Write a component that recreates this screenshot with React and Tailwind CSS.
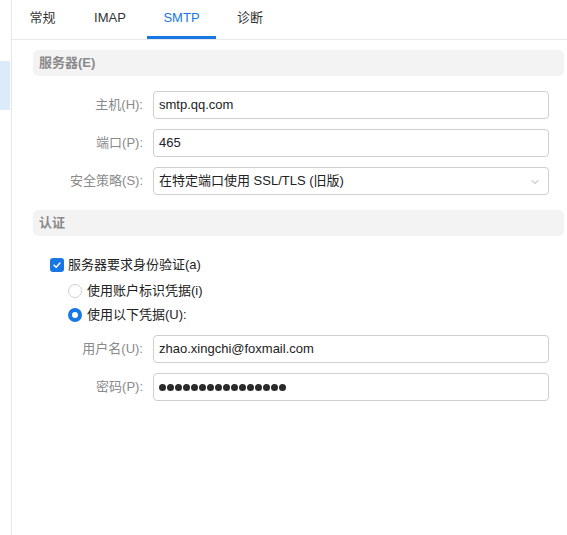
import React from 'react';
import { ChevronDown } from 'lucide-react';

const font = "font-['Liberation_Sans','Noto_Sans_CJK_SC',sans-serif]";

function Field({ label, children }) {
  return (
    <div className="flex items-center">
      <div className="w-[120px] pr-[10px] text-right text-[13px] leading-[18px] text-[#8a8a8a]">{label}</div>
      <div className="w-[396px] h-[28px] border border-[#cfcfcf] rounded-[4px] bg-white flex items-center pl-[5px] text-[13px] text-[#222] relative">
        {children}
      </div>
    </div>
  );
}

function Section({ title }) {
  return (
    <div className="h-[26px] rounded-[5px] bg-[#f3f3f3] flex items-center pl-[6px] text-[13px] font-bold text-[#8a8a8a]">
      {title}
    </div>
  );
}

export default function App() {
  const tabs = [
    { name: '常规', w: 'w-[61px]' },
    { name: 'IMAP', w: 'w-[74px]' },
    { name: 'SMTP', w: 'w-[69px]', active: true },
    { name: '诊断', w: 'w-[68px]' },
  ];

  return (
    <div className={`${font} w-[567px] h-[535px] bg-white flex overflow-hidden`}>
      {/* sidebar strip */}
      <div className="w-[12px] shrink-0 border-r border-[#e6e6e6] pt-[61px]">
        <div className="h-[49px] w-[10px] bg-[#dcebfc]" />
      </div>

      <div className="flex-1 flex flex-col">
        {/* tabs */}
        <div className="h-[40px] border-b border-[#e8e8e8] flex">
          {tabs.map((t) => (
            <div key={t.name} className={`${t.w} h-full flex flex-col items-center`}>
              <div className={`flex-1 flex items-center text-[13px] ${t.active ? 'text-[#1677e5]' : 'text-[#333]'}`}>
                {t.name}
              </div>
              <div className={`h-[3px] w-full ${t.active ? 'bg-[#1677e5]' : ''}`} />
            </div>
          ))}
        </div>

        {/* content */}
        <div className="pl-[21px] pr-[3px] pt-[10px]">
          <Section title="服务器(E)" />

          <div className="flex flex-col gap-[10px] mt-[15px]">
            <Field label="主机(H):">smtp.qq.com</Field>
            <Field label="端口(P):">465</Field>
            <Field label="安全策略(S):">
              在特定端口使用 SSL/TLS (旧版)
              <ChevronDown className="absolute right-[7px] top-[8px] w-[12px] h-[12px] text-[#8a8a8a]" strokeWidth={1.5} />
            </Field>
          </div>

          <div className="mt-[15px]">
            <Section title="认证" />
          </div>

          <div className="mt-[22px] pl-[17px] flex items-center h-[14px] text-[13px] text-[#222]">
            <div className="w-[14px] h-[14px] rounded-[3px] bg-[#1677e5] flex items-center justify-center mr-[4px]">
              <svg viewBox="0 0 12 12" className="w-[10px] h-[10px]" fill="none" stroke="white" strokeWidth="1.8" strokeLinecap="round" strokeLinejoin="round">
                <path d="M2.5 6.2 L5 8.6 L9.5 3.6" />
              </svg>
            </div>
            服务器要求身份验证(a)
          </div>

          <div className="mt-[12px] pl-[35px] flex items-center h-[14px] text-[13px] text-[#222]">
            <div className="w-[14px] h-[14px] rounded-full border border-[#d0d0d0] bg-white mr-[5px]" />
            使用账户标识凭据(i)
          </div>

          <div className="mt-[10px] pl-[35px] flex items-center h-[14px] text-[13px] text-[#222]">
            <div className="w-[14px] h-[14px] rounded-full bg-[#1677e5] flex items-center justify-center mr-[5px]">
              <div className="w-[6px] h-[6px] rounded-full bg-white" />
            </div>
            使用以下凭据(U):
          </div>

          <div className="flex flex-col gap-[10px] mt-[13px]">
            <Field label="用户名(U):">zhao.xingchi@foxmail.com</Field>
            <Field label="密码(P):">
              <div className="flex">
                {Array.from({ length: 16 }).map((_, i) => (
                  <div key={i} className="w-[7px] h-[7px] rounded-full bg-[#2a2a2a] mr-[1px]" />
                ))}
              </div>
            </Field>
          </div>
        </div>
      </div>
    </div>
  );
}
